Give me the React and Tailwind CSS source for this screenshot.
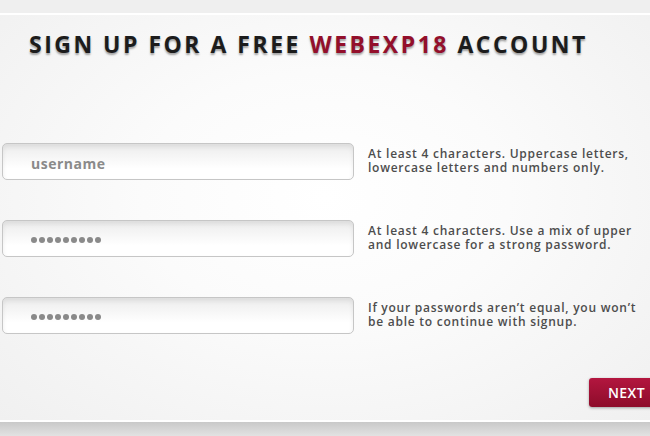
import React from 'react';

const fields = [
  {
    kind: 'text',
    placeholder: 'username',
    help: ['At least 4 characters. Uppercase letters,', 'lowercase letters and numbers only.'],
  },
  {
    kind: 'password',
    help: ['At least 4 characters. Use a mix of upper', 'and lowercase for a strong password.'],
  },
  {
    kind: 'password',
    help: ['If your passwords aren’t equal, you won’t', 'be able to continue with signup.'],
  },
];

function Field({ field }) {
  return (
    <div className="flex items-start">
      <div className="ml-[2px] flex h-[37px] w-[352px] items-center rounded-[5px] border border-[#c6c6c6] bg-[linear-gradient(to_bottom,#ececec,#ffffff_70%)] pl-[28px] pt-[3px] shadow-[inset_0_3px_5px_rgba(0,0,0,0.07)]">
        {field.kind === 'text' ? (
          <span className="text-[14px] font-bold tracking-[0.5px] text-[#8a8a8a]">{field.placeholder}</span>
        ) : (
          <div className="flex gap-[2px]">
            {Array.from({ length: 9 }).map((_, i) => (
              <span key={i} className="h-[6px] w-[6px] rounded-full bg-[#8a8a8a]" />
            ))}
          </div>
        )}
      </div>
      <p className="ml-[14px] mt-[4px] text-[12px] font-semibold leading-[14px] tracking-[0.75px] text-[#4d4d4d]">
        {field.help[0]}
        <br />
        {field.help[1]}
      </p>
    </div>
  );
}

export default function App() {
  return (
    <div className="flex h-[436px] w-[650px] flex-col overflow-hidden bg-[#e4e4e4] font-['Open_Sans',sans-serif]">
      <div className="h-[13px] bg-[#efefef]" />
      <div className="h-[409px] overflow-hidden border-y-2 border-white bg-[radial-gradient(ellipse_at_50%_45%,#ffffff_0%,#fbfbfb_40%,#f0f0f0_100%)]">
        <h1 className="pl-[29px] pt-[14px] text-[23px] font-bold leading-[30px] tracking-[2.5px] text-[#1c1c1c] [text-shadow:0_2px_2px_rgba(0,0,0,0.35)]">
          SIGN UP FOR A FREE <span className="text-[#930f2b]">WEBEXP18</span> ACCOUNT
        </h1>
        <div className="mt-[84px] flex flex-col gap-[40px]">
          {fields.map((f, i) => (
            <Field key={i} field={f} />
          ))}
        </div>
        <div className="mt-[44px] flex justify-end">
          <button className="-mr-[20px] h-[29px] w-[81px] rounded-[3px] bg-[linear-gradient(to_bottom,#b3163f,#8d0c2a)] pl-[19px] text-left text-[14px] font-semibold tracking-[0.4px] text-white shadow-[0_1px_3px_rgba(0,0,0,0.35)]">
            NEXT
          </button>
        </div>
      </div>
      <div className="flex-1 bg-[linear-gradient(to_bottom,#c9c9c9,#e2e2e2)]" />
    </div>
  );
}
